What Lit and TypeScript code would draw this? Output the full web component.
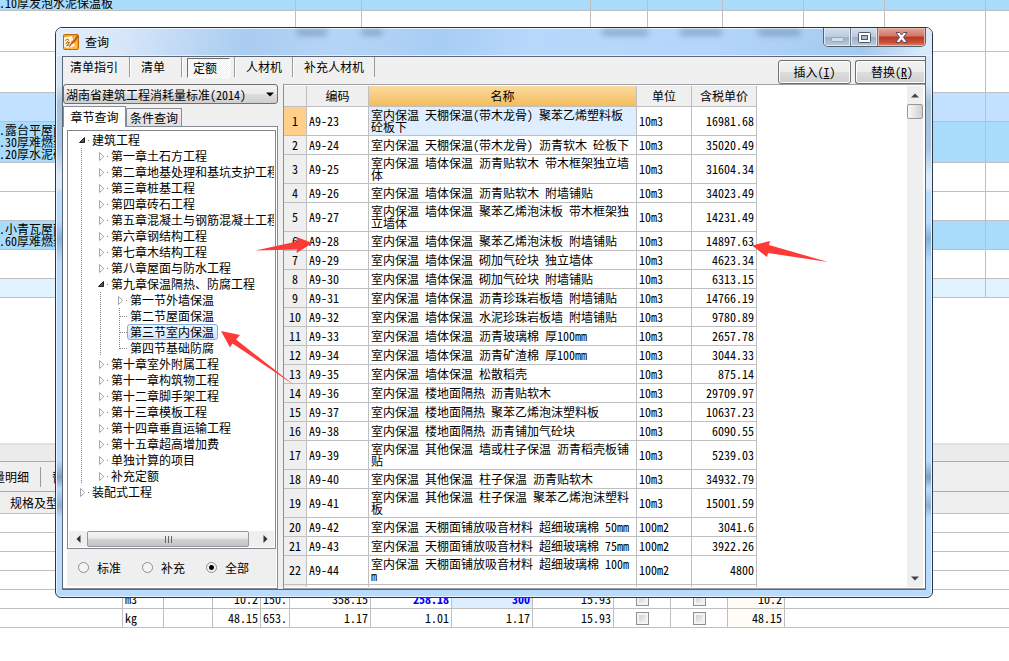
import { LitElement, html, svg, css, nothing } from "lit";
import { customElement, state } from "lit/decorators.js";
import { classMap } from "lit/directives/class-map.js";

type QuotaRow = [code: string, name: string, unit: string, price: string];

const QUOTAS: QuotaRow[] = [
  ["A9-23", "室内保温 天棚保温(带木龙骨) 聚苯乙烯塑料板\n砼板下", "10m3", "16981.68"],
  ["A9-24", "室内保温 天棚保温(带木龙骨) 沥青软木 砼板下", "10m3", "35020.49"],
  ["A9-25", "室内保温 墙体保温 沥青贴软木 带木框架独立墙\n体", "10m3", "31604.34"],
  ["A9-26", "室内保温 墙体保温 沥青贴软木 附墙铺贴", "10m3", "34023.49"],
  ["A9-27", "室内保温 墙体保温 聚苯乙烯泡沫板 带木框架独\n立墙体", "10m3", "14231.49"],
  ["A9-28", "室内保温 墙体保温 聚苯乙烯泡沫板 附墙铺贴", "10m3", "14897.63"],
  ["A9-29", "室内保温 墙体保温 砌加气砼块 独立墙体", "10m3", "4623.34"],
  ["A9-30", "室内保温 墙体保温 砌加气砼块 附墙铺贴", "10m3", "6313.15"],
  ["A9-31", "室内保温 墙体保温 沥青珍珠岩板墙 附墙铺贴", "10m3", "14766.19"],
  ["A9-32", "室内保温 墙体保温 水泥珍珠岩板墙 附墙铺贴", "10m3", "9780.89"],
  ["A9-33", "室内保温 墙体保温 沥青玻璃棉 厚100mm", "10m3", "2657.78"],
  ["A9-34", "室内保温 墙体保温 沥青矿渣棉 厚100mm", "10m3", "3044.33"],
  ["A9-35", "室内保温 墙体保温 松散稻壳", "10m3", "875.14"],
  ["A9-36", "室内保温 楼地面隔热 沥青贴软木", "10m3", "29709.97"],
  ["A9-37", "室内保温 楼地面隔热 聚苯乙烯泡沫塑料板", "10m3", "10637.23"],
  ["A9-38", "室内保温 楼地面隔热 沥青铺加气砼块", "10m3", "6090.55"],
  ["A9-39", "室内保温 其他保温 墙或柱子保温 沥青稻壳板铺\n贴", "10m3", "5239.03"],
  ["A9-40", "室内保温 其他保温 柱子保温 沥青贴软木", "10m3", "34932.79"],
  ["A9-41", "室内保温 其他保温 柱子保温 聚苯乙烯泡沫塑料\n板", "10m3", "15001.59"],
  ["A9-42", "室内保温 天棚面铺放吸音材料 超细玻璃棉 50mm", "100m2", "3041.6"],
  ["A9-43", "室内保温 天棚面铺放吸音材料 超细玻璃棉 75mm", "100m2", "3922.26"],
  ["A9-44", "室内保温 天棚面铺放吸音材料 超细玻璃棉 100m\nm", "100m2", "4800"],
];

interface TreeNode {
  label: string;
  open?: boolean;
  leaf?: boolean;
  children?: TreeNode[];
}

const TREE: TreeNode[] = [
  {
    label: "建筑工程",
    open: true,
    children: [
      { label: "第一章土石方工程" },
      { label: "第二章地基处理和基坑支护工程" },
      { label: "第三章桩基工程" },
      { label: "第四章砖石工程" },
      { label: "第五章混凝土与钢筋混凝土工程" },
      { label: "第六章钢结构工程" },
      { label: "第七章木结构工程" },
      { label: "第八章屋面与防水工程" },
      {
        label: "第九章保温隔热、防腐工程",
        open: true,
        children: [
          { label: "第一节外墙保温" },
          { label: "第二节屋面保温", leaf: true },
          { label: "第三节室内保温", leaf: true },
          { label: "第四节基础防腐", leaf: true },
        ],
      },
      { label: "第十章室外附属工程" },
      { label: "第十一章构筑物工程" },
      { label: "第十二章脚手架工程" },
      { label: "第十三章模板工程" },
      { label: "第十四章垂直运输工程" },
      { label: "第十五章超高增加费" },
      { label: "单独计算的项目" },
      { label: "补充定额" },
    ],
  },
  { label: "装配式工程" },
];

const sharedStyles = css`
  * {
    box-sizing: border-box;
  }
  button,
  select,
  input {
    font: inherit;
    color: inherit;
    margin: 0;
    padding: 0;
    border: 0;
    background: none;
    border-radius: 0;
  }
  table {
    border-collapse: separate;
    border-spacing: 0;
    table-layout: fixed;
  }
  th {
    font-weight: normal;
  }
`;

@customElement("chapter-tree")
export class ChapterTree extends LitElement {
  @state() private selected = "第三节室内保温";

  static styles = [
    sharedStyles,
    css`
      :host {
        display: block;
      }
      ul {
        list-style: none;
        margin: 0;
        padding: 0;
      }
      .branch {
        margin-left: 4px;
        padding-left: 15px;
        background: repeating-linear-gradient(#808080 0 1px, transparent 1px 2px) 0 0 / 1px 100% no-repeat;
      }
      .row {
        display: flex;
        align-items: center;
        height: 16px;
      }
      .mark {
        flex: none;
        width: 12px;
        height: 16px;
      }
      .label {
        height: 16px;
        line-height: 14px;
        padding: 0 3px 0 2px;
        border: 1px solid transparent;
        border-radius: 3px;
        white-space: nowrap;
        text-align: left;
      }
      .chosen {
        border-color: #84acdd;
        background: linear-gradient(#f2f8ff, #cfe4fd);
      }
    `,
  ];

  private mark(node: TreeNode, last: boolean) {
    if (node.leaf) {
      return html`<svg class="mark" viewBox="0 0 12 16" aria-hidden="true">
        <path d=${last ? "M4.5 0V9" : "M4.5 0V16"} stroke="#808080" stroke-dasharray="1 1" fill="none" />
        <path d="M5 8.5H12" stroke="#808080" stroke-dasharray="1 1" fill="none" />
      </svg>`;
    }
    return html`<svg class="mark" viewBox="0 0 12 16" aria-hidden="true">
      ${node.open
        ? svg`<path d="M7.500 5.500V10.500H2.500Z" fill="#505050" stroke="#222" stroke-width="1" stroke-linejoin="round"/>`
        : svg`<path d="M3.500 4.500L7.800 8.500L3.500 12.500Z" fill="#fff" stroke="#a6a6a6"/>`}
      <rect x="11" y="8" width="1" height="1" fill="#808080" />
    </svg>`;
  }

  private nodes(list: TreeNode[], depth: number): unknown {
    return html`<ul class=${classMap({ branch: depth > 0 })}>
      ${list.map(
        (n, i) => html`<li>
          <div class="row">
            ${this.mark(n, i === list.length - 1)}
            <button
              class=${classMap({ label: true, chosen: n.label === this.selected })}
              @click=${() => (this.selected = n.label)}
            >${n.label}</button>
          </div>
          ${n.children ? this.nodes(n.children, depth + 1) : nothing}
        </li>`,
      )}
    </ul>`;
  }

  render() {
    return this.nodes(TREE, 0);
  }
}

@customElement("quota-grid")
export class QuotaGrid extends LitElement {
  static styles = [
    sharedStyles,
    css`
      :host {
        display: flex;
        min-width: 0;
        min-height: 0;
        background: #fff;
        border-left: 1px solid #8e8f98;
        border-top: 1px solid #a0a0a8;
        border-bottom: 1px solid #a0a0a8;
        padding: 1px 2px 1px 0;
      }
      .view {
        flex: 1;
        min-width: 0;
        overflow: hidden;
      }
      table {
        width: 473px;
      }
      .c-no { width: 23px; }
      .c-code { width: 62px; }
      .c-name { width: 268px; }
      .c-unit { width: 55px; }
      .c-price { width: 65px; }
      th,
      td {
        padding: 0 2px;
        height: 19px;
        line-height: 12px;
        border-right: 1px solid #bfbfbf;
        border-bottom: 1px solid #bfbfbf;
        text-align: left;
        white-space: pre;
      }
      th {
        background: #efefef;
        text-align: center;
        padding: 0;
      }
      thead th {
        height: 21px;
      }
      thead .name {
        background: linear-gradient(#fadaa0, #f3bc5c);
      }
      .tall td {
        height: 29px;
      }
      .price {
        text-align: right;
      }
      .current th {
        background: #ffd08a;
      }
      .current .name {
        background: #dfeeff;
      }
      .bar {
        flex: none;
        width: 16px;
        display: flex;
        flex-direction: column;
        align-items: stretch;
        background: #efefef;
      }
      .step {
        height: 18px;
        display: flex;
        align-items: center;
        justify-content: center;
      }
      .thumb {
        height: 15px;
        border: 1px solid #979797;
        border-radius: 2px;
        background: linear-gradient(90deg, #fafafa, #e4e4e4 50%, #cfcfd2);
      }
      .track {
        flex: 1;
      }
    `,
  ];

  render() {
    return html`
      <div class="view">
        <table>
          <colgroup>
            <col class="c-no" /><col class="c-code" /><col class="c-name" /><col class="c-unit" /><col class="c-price" />
          </colgroup>
          <thead>
            <tr>
              <th></th><th>编码</th><th class="name">名称</th><th>单位</th><th>含税单价</th>
            </tr>
          </thead>
          <tbody>
            ${QUOTAS.map(
              ([code, name, unit, price], i) => html`<tr
                class=${classMap({ tall: name.includes("\n"), current: i === 0 })}
              ><th>${i + 1}</th><td>${code}</td><td class="name">${name}</td><td>${unit}</td><td class="price">${price}</td></tr>`,
            )}
            <tr><th></th><td></td><td></td><td></td><td></td></tr>
          </tbody>
        </table>
      </div>
      <div class="bar">
        <button class="step" aria-label="向上"><svg width="8" height="5"><path d="M0 4.500L4 0.500L8 4.500Z" fill="#444" /></svg></button>
        <div class="thumb"></div>
        <div class="track"></div>
        <button class="step" aria-label="向下"><svg width="8" height="5"><path d="M0 0.500L4 4.500L8 0.500Z" fill="#444" /></svg></button>
      </div>
    `;
  }
}

@customElement("query-dialog")
export class QueryDialog extends LitElement {
  @state() private scope = "全部";
  @state() private page = "定额";

  static styles = [
    sharedStyles,
    css`
      :host {
        display: flex;
        flex-direction: column;
        padding: 0 6px 7px;
        border: 1px solid #2c3744;
        border-radius: 7px 7px 6px 6px;
        overflow: hidden;
        box-shadow: inset 0 0 0 1px #e6f3ff;
        background:
          linear-gradient(#d5e6f8 10%, #a9c3dd 13%, #a9c6e4 21%, #dcebfa 26%, #dcebfa 28%, #b9dbfd 29%, #b9dbfd 34%, #86b2dc 37%, #b9dbfd 41%, #b9dbfd 76%, #7d9fc2 79%, #b9dbfd 81%, #8fb0d2 84%, #b9dbfd 86%);
      }
      .title {
        flex: none;
        height: 28px;
        margin: 0 -6px;
        padding-left: 7px;
        display: flex;
        align-items: flex-start;
        position: relative;
        background:
          linear-gradient(100deg, #e3eefb 0, #d7e6f8 8%, #bcd6f4 16%, #a9ccf0 22%, #b5d5f6 32%, #a8cdf3 44%, #b6d8fb 54%, #b3d6fa 75%, #a5c8ee 92%, #d9ebfb 99%);
        box-shadow: inset 0 1px 0 #e9f5ff, inset 0 -1px 0 #e3f1fd;
      }
      .logo {
        width: 16px;
        height: 16px;
        margin-top: 6px;
      }
      .caption {
        flex: 1;
        margin: 0;
        font: inherit;
        line-height: 16px;
        padding: 6px 0 0 6px;
      }
      .smudge {
        position: absolute;
        top: 2px;
        height: 5px;
        background: #49627e;
        filter: blur(3px);
        opacity: 0.5;
      }
      .window-buttons {
        display: flex;
        height: 19px;
        margin-right: 6px;
        border: 1px solid #55606e;
        border-top: 0;
        border-radius: 0 0 5px 5px;
        overflow: hidden;
      }
      .window-buttons button {
        display: flex;
        align-items: center;
        justify-content: center;
        width: 27px;
        background: linear-gradient(#d3dfec 0, #bccbdc 48%, #9cb0c6 50%, #b9cde0);
        border-right: 1px solid #6d7986;
        box-shadow: inset 0 0 0 1px #dce8f4;
      }
      .window-buttons .close {
        width: 47px;
        border-right: 0;
        background: linear-gradient(#e0a79d 0, #d27564 45%, #b93622 50%, #c8503a 80%, #dd8a70);
        box-shadow: inset 0 0 0 1px #ecb8aa;
      }
      .client {
        flex: 1;
        min-height: 0;
        display: flex;
        flex-direction: column;
        border: 1px solid #5c6674;
        background: #f0f0f0;
      }
      .toolbar {
        flex: none;
        height: 27px;
        display: flex;
        align-items: flex-start;
        overflow: hidden;
      }
      .group {
        display: flex;
        height: 20px;
        min-width: 52px;
        padding: 0 10px;
        border-right: 1px solid #9a9a9a;
        border-left: 1px solid #fff;
      }
      .group:first-child {
        border-left: 0;
        padding: 0 11px 0 7px;
      }
      .group.on {
        padding: 0 4px;
      }
      .tool {
        height: 20px;
        line-height: 20px;
        white-space: nowrap;
      }
      .on .tool {
        margin-top: 1px;
        padding: 0 12px 0 5px;
        line-height: 18px;
        border: 1px solid #fff;
        border-top-color: #707070;
        border-left-color: #707070;
        background: repeating-conic-gradient(#fff 0 25%, #efefef 0 50%) 0 0 / 2px 2px;
      }
      .space {
        flex: 1;
      }
      .push {
        flex: none;
        height: 24px;
        line-height: 20px;
        width: 73px;
        margin: 3px 0 0 4px;
        border: 1px solid #707070;
        border-radius: 3px;
        box-shadow: inset 0 0 0 1px #fcfcfc;
        background: linear-gradient(#f2f2f2, #ebebeb 50%, #dddddd 51%, #cfcfcf);
        white-space: nowrap;
      }
      .push.edge {
        width: 70px;
        padding-left: 3px;
        border-right: 0;
        border-radius: 3px 0 0 3px;
      }
      .push u {
        text-underline-offset: 1px;
      }
      .body {
        flex: 1;
        min-height: 0;
        display: grid;
        grid-template-columns: 215px minmax(0, 1fr);
        grid-template-rows: minmax(0, 1fr);
        column-gap: 5px;
      }
      .side {
        min-height: 0;
        display: flex;
        flex-direction: column;
      }
      .pick {
        position: relative;
        display: block;
        flex: none;
      }
      .pick select {
        appearance: none;
        display: block;
        width: 100%;
        height: 20px;
        padding-left: 2px;
        border: 1px solid #707070;
        border-radius: 3px;
        background: linear-gradient(#f2f2f2, #ebebeb 50%, #dddddd 51%, #cfcfcf);
      }
      .pick svg {
        position: absolute;
        right: 4px;
        top: 8px;
        pointer-events: none;
      }
      .tabs {
        flex: none;
        display: flex;
        align-items: flex-end;
        height: 22px;
      }
      .tab {
        height: 18px;
        line-height: 18px;
        width: 56px;
        border: 1px solid #898c95;
        border-bottom: 0;
        background: linear-gradient(#f3f3f3, #ddd);
        white-space: nowrap;
      }
      .tab.front {
        height: 21px;
        width: 63px;
        line-height: 18px;
        margin-bottom: -1px;
        background: #fff;
        position: relative;
      }
      .sheet {
        flex: 1;
        min-height: 0;
        display: flex;
        flex-direction: column;
        background: #fff;
        border: 1px solid #898c95;
        border-left: 0;
        padding: 3px 1px 2px 4px;
      }
      .tree {
        flex: 1;
        min-height: 0;
        display: flex;
        flex-direction: column;
        border: 1px solid #828790;
        padding: 1px;
      }
      .tree chapter-tree {
        flex: 1;
        min-height: 0;
        overflow: hidden;
        padding-left: 8px;
      }
      .hbar {
        flex: none;
        height: 16px;
        display: flex;
        background: #efefef;
      }
      .hbar button {
        width: 18px;
        display: flex;
        align-items: center;
        justify-content: center;
      }
      .hthumb {
        flex: 1;
        margin-right: 7px;
        display: flex;
        align-items: center;
        justify-content: center;
        border: 1px solid #979797;
        border-radius: 2px;
        background: linear-gradient(#f6f6f6, #e6e6e6 48%, #d2d2d6 52%, #c4c4c8);
      }
      .scope {
        flex: none;
        height: 37px;
        display: flex;
        align-items: center;
        background: #efefef;
        padding-left: 11px;
        gap: 19px;
      }
      .scope label {
        display: flex;
        align-items: center;
        gap: 8px;
        width: 45px;
        white-space: nowrap;
      }
      .scope input {
        appearance: none;
        flex: none;
        width: 11px;
        height: 11px;
        border: 1px solid #8e8f8f;
        border-radius: 50%;
        background: #f4f4f4;
      }
      .scope input:checked {
        background: radial-gradient(circle, #000 0 2px, #f4f4f4 3px);
      }
    `,
  ];

  render() {
    return html`
      <div class="title">
        <svg class="logo" viewBox="0 0 16 16" aria-hidden="true">
          <rect x="0.500" y="0.500" width="15" height="15" rx="1" fill="#f6a21c" stroke="#b96a10" />
          <path d="M1 3.500L9 2L12 12L5 14.500L1 13Z" fill="#fff6dc" />
          <path d="M2 6.500L5 5L5.500 6.500L3 9.500L7 8L3.500 12L8 10.500L6 13.500" fill="none" stroke="#c9690c" />
          <path d="M14.500 1L8.500 7.500L7 11.500L10.500 9L15 3Z" fill="#b5410d" />
          <path d="M13 2.500L8.500 8.500" stroke="#ffe9a8" stroke-width="0.800" />
          <path d="M13 8V14H7" fill="none" stroke="#ffd45e" />
        </svg>
        <h1 class="caption">查询</h1>
        ${[[241, 30], [306, 20], [546, 46], [624, 42], [702, 42]].map(
          ([x, w]) => html`<span class="smudge" style="left:${x}px;width:${w}px"></span>`,
        )}
        <div class="window-buttons">
          <button aria-label="最小化">
            <svg width="13" height="12"><rect x="0.500" y="6.500" width="12" height="4" rx="1" fill="#d5dee8" stroke="#98a5b3" /></svg>
          </button>
          <button aria-label="最大化">
            <svg width="13" height="11"><rect x="0.500" y="0.500" width="12" height="10" rx="1" fill="#fff" stroke="#4c5664" /><rect x="3.500" y="3.500" width="6" height="4" fill="#a9bccf" stroke="#4c5664" /></svg>
          </button>
          <button class="close" aria-label="关闭">
            <svg width="13" height="11" viewBox="0 0 13 11"><path d="M1 0.500H4.500L6.500 3L8.500 0.500H12L8.500 5.300L12.300 10.500H8.600L6.500 7.700L4.400 10.500H0.700L4.500 5.300Z" fill="#fff" stroke="#5b4a52" /></svg>
          </button>
        </div>
      </div>
      <div class="client">
        <div class="toolbar">
          ${["清单指引", "清单", "定额", "人材机", "补充人材机"].map(
            (name) => html`<div class=${classMap({ group: true, on: name === this.page })}>
              <button class="tool" @click=${() => (this.page = name)}>${name}</button>
            </div>`,
          )}
          <div class="space"></div>
          <button class="push">插入(<u>I</u>)</button>
          <button class="push edge">替换(<u>R</u>)</button>
        </div>
        <div class="body">
          <div class="side">
            <label class="pick">
              <select aria-label="定额标准">
                <option>湖南省建筑工程消耗量标准(2014)</option>
              </select>
              <svg width="8" height="5"><path d="M0 0.500H8L4 4.500Z" fill="#000" /></svg>
            </label>
            <div class="tabs">
              <button class="tab front">章节查询</button>
              <button class="tab">条件查询</button>
            </div>
            <div class="sheet">
              <div class="tree">
                <chapter-tree></chapter-tree>
                <div class="hbar">
                  <button aria-label="向左"><svg width="5" height="8"><path d="M4.500 0L0.500 4L4.500 8Z" fill="#333" /></svg></button>
                  <div class="hthumb"><svg width="9" height="7"><path d="M1.500 0V7M4.500 0V7M7.500 0V7" stroke="#666" /></svg></div>
                  <button aria-label="向右"><svg width="5" height="8"><path d="M0.500 0L4.500 4L0.500 8Z" fill="#333" /></svg></button>
                </div>
              </div>
              <div class="scope">
                ${["标准", "补充", "全部"].map(
                  (name) => html`<label
                    ><input
                      type="radio"
                      name="scope"
                      .checked=${name === this.scope}
                      @change=${() => (this.scope = name)}
                    />${name}</label
                  >`,
                )}
              </div>
            </div>
          </div>
          <quota-grid></quota-grid>
        </div>
      </div>
    `;
  }
}

const UPPER_ROWS: { cls: string; text: string }[] = [
  { cls: "h11 sky", text: ".10厚发泡水泥保温板" },
  { cls: "h41", text: "" },
  { cls: "h41", text: "" },
  { cls: "h29 pale", text: "" },
  { cls: "h41 sky", text: ".露台平屋面\n.30厚难燃聚\n.20厚水泥砂" },
  { cls: "h29", text: "" },
  { cls: "h29", text: "" },
  { cls: "h29 sky", text: ".小青瓦屋面\n.60厚难燃聚" },
  { cls: "h29", text: "" },
  { cls: "h19 ice", text: "" },
];

@customElement("app-root")
export class AppRoot extends LitElement {
  static styles = [
    sharedStyles,
    css`
      :host {
        display: flex;
        flex-direction: column;
        position: relative;
        min-height: 100vh;
        overflow: hidden;
        background: #fff;
        color: #000;
        font: 12px "Noto Sans Mono CJK SC", "Noto Sans CJK SC", "Liberation Sans", sans-serif;
      }
      .upper {
        flex: 1;
      }
      table {
        width: 100%;
      }
      td,
      th {
        padding: 0;
        border-right: 1px solid #bfbfbf;
        border-bottom: 1px solid #bfbfbf;
        white-space: pre;
        line-height: 12px;
        text-align: left;
      }
      td:last-child {
        border-right: 0;
      }
      .upper td {
        height: inherit;
      }
      .note {
        margin-left: -1px;
      }
      .h11 { height: 11px; }
      .h11 .note { height: 10px; line-height: 6px; }
      .h19 { height: 19px; }
      .h29 { height: 29px; }
      .h41 { height: 41px; }
      .sky { background: #a9dbfb; }
      .pale { background: #c2e0ff; }
      .ice { background: #e1f3ff; }
      .w29 { width: 29px; }
      .w41 { width: 41px; }
      .w48 { width: 48px; }
      .w49 { width: 49px; }
      .w57 { width: 57px; }
      .w66 { width: 66px; }
      .w75 { width: 75px; }
      .w81 { width: 81px; }
      .w101 { width: 101px; }
      .w123 { width: 123px; }
      .w229 { width: 229px; }
      .w296 { width: 296px; }
      .lower {
        flex: none;
        padding-bottom: 33px;
      }
      .splitter {
        height: 18px;
        background: #ebebeb;
        border-top: 2px solid #e0e0e0;
      }
      .strip {
        height: 31px;
        display: flex;
        align-items: center;
        background: #efefef;
        border-top: 1px solid #a9a9b0;
        border-bottom: 1px solid #a9a9b0;
      }
      .strip button {
        height: 20px;
        padding: 0 11px;
        border-right: 1px solid #9a9a9a;
        white-space: nowrap;
      }
      .strip .cut {
        margin-left: -18px;
      }
      .lower th {
        height: 22px;
        padding-left: 10px;
        background: #efefef;
        border-right: 0;
      }
      .lower td {
        height: 19px;
        padding: 0 2px;
      }
      .lower .plain td {
        border-right: 0;
      }
      .lower .num {
        text-align: right;
      }
      .lower .tick {
        text-align: center;
      }
      .lower .warm {
        background: #fffcf8;
      }
      .lower .blue {
        color: #0000ff;
        font-weight: bold;
      }
      .lower .cell {
        background: #dfeeff;
      }
      .tick input {
        appearance: none;
        display: block;
        width: 13px;
        height: 13px;
        margin: 0 auto;
        border: 1px solid #8e8f8f;
        background: linear-gradient(135deg, #c5cad0, #fafafa);
        box-shadow: inset 0 0 0 2px #f4f4f4;
      }
      query-dialog {
        position: absolute;
        top: 27px;
        right: 76px;
        bottom: 63px;
        left: 55px;
      }
      .pointers {
        position: absolute;
        inset: 0;
        width: 100%;
        height: 100%;
        pointer-events: none;
      }
    `,
  ];

  private material(unit: string, values: string[], n: number) {
    const [a, b, c, d, e, f] = values;
    const hot = n === 0;
    return html`<tr>
      <td></td><td>${unit}</td><td></td><td class="num">${a}</td><td>${b}</td><td class="num">${c}</td>
      <td class=${classMap({ num: true, blue: hot })}>${d}</td>
      <td class=${classMap({ num: true, blue: hot, cell: hot })}>${e}</td>
      <td class="num">${f}</td>
      <td class="tick"><input type="checkbox" aria-label="暂估" /></td>
      <td class="tick"><input type="checkbox" aria-label="锁定" /></td>
      <td class="num warm">${a}</td><td></td>
    </tr>`;
  }

  render() {
    return html`
      <div class="upper">
        <table>
          <colgroup>
            ${["w296", "w66", "w229", "w57", "w75", "w81", "w81", "w101", ""].map((c) => html`<col class=${c} />`)}
          </colgroup>
          <tbody>
            ${UPPER_ROWS.map(
              (r) => html`<tr class=${r.cls}><td>${r.text ? html`<div class="note">${r.text}</div>` : nothing}</td>${Array.from({ length: 8 }, () => html`<td></td>`)}</tr>`,
            )}
          </tbody>
        </table>
      </div>
      <div class="lower">
        <div class="splitter"></div>
        <div class="strip">
          <button class="cut">量明细</button>
          <button>替换</button>
        </div>
        <table>
          <colgroup>
            ${["w123", "w41", "w49", "w48", "w29", "w81", "w81", "w81", "w81", "w57", "w57", "w57", ""].map(
              (c) => html`<col class=${c} />`,
            )}
          </colgroup>
          <thead>
            <tr><th>规格及型号</th><th colspan="12"></th></tr>
          </thead>
          <tbody>
            ${[0, 1, 2, 3].map(() => html`<tr class="plain"><td colspan="13"></td></tr>`)}
            ${this.material("m3", ["10.2", "150.", "358.15", "258.18", "300", "15.93"], 0)}
            ${this.material("kg", ["48.15", "653.", "1.17", "1.01", "1.17", "15.93"], 1)}
          </tbody>
        </table>
      </div>
      <query-dialog></query-dialog>
      <svg class="pointers" aria-hidden="true" fill="#fd3a36">
        <path d="M255.500 250.500L297 241.500L296.500 237L312.500 243L296.500 253L297 249.500Z" />
        <path d="M221 331L240 335L236 339.500L294 385L232.500 343.500L230 347.500Z" />
        <path d="M752 245.500L770 241L769 245L828 262L768 253L767 257Z" />
      </svg>
    `;
  }
}
